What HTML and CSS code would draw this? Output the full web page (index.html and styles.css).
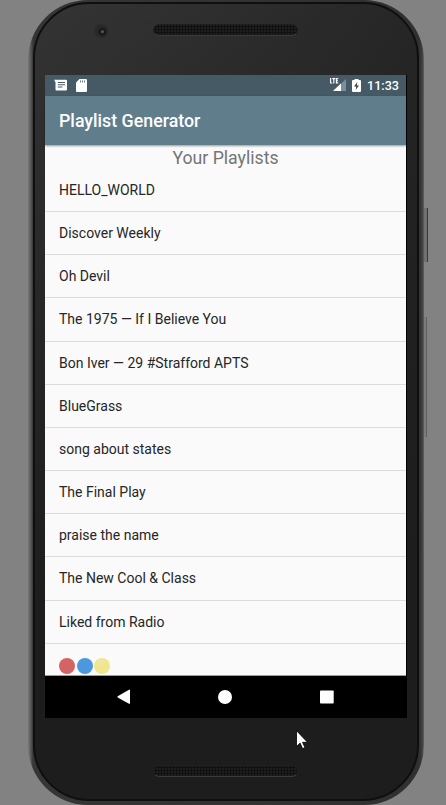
FILE: index.html
```html
<!DOCTYPE html>
<html lang="en">
<head>
<meta charset="utf-8">
<title>Playlist Generator</title>
<link rel="stylesheet" href="styles.css">
</head>
<body>
<div class="phone">
  <i class="side-button power"></i>
  <i class="side-button volume"></i>
  <div class="face">
    <div class="bezel-top"><i class="camera"></i><i class="speaker"></i></div>
    <main class="screen">
      <div class="status">
        <svg class="status-message" width="13" height="13" viewBox="0 0 13 13"><path fill="#fff" fill-rule="evenodd" d="M0 .8h12q1 0 1 1v8.700q0 1-1 1H2.500q-1 0-1-1V3.300zM3.800 3h7.200v1.100H3.800zm0 2.200h7.200v1.100H3.800zm0 2.300h4.700v1.100H3.800z"/></svg>
        <svg class="status-card" width="11" height="13" viewBox="0 0 11 13"><path fill="#fff" d="M3.500 0H10q1 0 1 1v11q0 1-1 1H1q-1 0-1-1V3.500z"/><path stroke="#455a64" stroke-width=".8" d="M4.500 1.500v2M6.500 1.500v2M8.500 1.500v2"/></svg>
        <span class="spacer"></span>
        <svg class="status-signal" width="16" height="14" viewBox="0 0 16 14"><path fill="#78909c" d="M16 1v12H3z"/><path fill="#fff" d="M11 5.600V13H3z"/><path fill="none" stroke="#fff" stroke-width="1.100" d="M.6 0v5h1.700M2.300.6h3M3.800.6v4.900M8.200.6H6.400v4.300h1.800M6.400 2.700h1.600"/></svg>
        <svg class="status-battery" width="9" height="13" viewBox="0 0 9 13"><path fill="#fff" d="M2.500 0h4v1H8q1 0 1 1v10q0 1-1 1H1q-1 0-1-1V2q0-1 1-1h1.500z"/><path fill="#37474f" d="M5.300 3 2 7.500h2.200L3.700 11 7 6.500H4.900z"/></svg>
        <span class="clock">11:33</span>
      </div>
      <header class="app-bar">Playlist Generator</header>
      <div class="content">
        <h1 class="heading">Your Playlists</h1>
        <ul class="list">
          <li>HELLO_WORLD</li>
          <li>Discover Weekly</li>
          <li>Oh Devil</li>
          <li>The 1975 — If I Believe You</li>
          <li>Bon Iver — 29 #Strafford APTS</li>
          <li>BlueGrass</li>
          <li>song about states</li>
          <li>The Final Play</li>
          <li>praise the name</li>
          <li>The New Cool &amp; Class</li>
          <li>Liked from Radio</li>
          <li class="dots"><i class="dot red"></i><i class="dot blue"></i><i class="dot yellow"></i></li>
        </ul>
      </div>
      <nav class="nav">
        <svg width="14" height="16" viewBox="0 0 14 16"><path fill="#fff" d="M.7 7.200 12 .7q1-.5 1 .5v13q0 1-1 .5L.7 8.400Q0 7.800.7 7.200z"/></svg>
        <svg class="home" width="14" height="14" viewBox="0 0 14 14"><circle cx="7" cy="7" r="7" fill="#fff"/></svg>
        <svg width="14" height="14" viewBox="0 0 14 14"><rect y=".5" width="13.700" height="13" rx=".8" fill="#fff"/></svg>
      </nav>
    </main>
    <div class="bezel-bottom"><i class="speaker"></i></div>
  </div>
</div>
<svg class="cursor" width="13" height="20" viewBox="0 0 13 20"><path fill="#fff" stroke="#000" stroke-width=".8" d="M.5.7v15.800l3.600-3.400 2.500 5.500 2.400-1-2.500-5.300h5z"/></svg>
</body>
</html>
```
FILE: styles.css
```css
* { box-sizing: border-box; }
body {
  margin: 0;
  height: 805px;
  overflow: hidden;
  background: #828282;
  font-family: Roboto, "Liberation Sans", sans-serif;
}
.phone {
  position: relative;
  width: 396px;
  height: 805px;
  margin-left: 28px;
  padding: 2px 5px 3px 5px;
  border-radius: 60px;
  background: linear-gradient(90deg, #787878 0, #555 3px, #353535 5px, #303030 391px, #3d3d3d 394px, #606060 396px);
}
.side-button {
  position: absolute;
  left: 396px;
  width: 4px;
  background: #707070;
  border-right: 1px solid #383838;
}
.power { top: 208px; height: 54px; }
.volume { top: 317px; height: 120px; width: 3px; border-color: #606060; background: #7b7b7b; }
.face {
  height: 799px;
  border: 2px solid #0f0f0f;
  border-radius: 56px;
  background: linear-gradient(180deg, transparent 0, #1d1d1d 75%), linear-gradient(100deg, #353435 0, #2b2b2b 50%, #202020 100%);
  overflow: hidden;
}
.bezel-top {
  display: flex;
  height: 71px;
  padding: 20px 0 0 60px;
}
.camera {
  width: 14px;
  height: 14px;
  margin-left: -1px;
  border-radius: 50%;
  background: radial-gradient(circle at 60% 55%, #555 0 1px, #191919 2px 3px, #292929 5px);
}
.speaker {
  display: block;
  width: 145px;
  height: 12px;
  border-radius: 6px;
  border: 1px solid #202020;
  border-bottom-color: #3a3a3a;
  background: radial-gradient(circle, #0b0b0b 0 .7px, #202020 1.500px) 0 0 / 3px 3px;
}
.bezel-top .speaker { margin-left: 45px; }
.screen {
  display: flex;
  flex-direction: column;
  width: 362px;
  height: 643px;
  margin-left: 10px;
  background: linear-gradient(90deg, #fafafa 361px, #000 361px);
}
.status {
  display: flex;
  align-items: flex-start;
  width: 361px;
  height: 21px;
  padding: 4px 7px 0 9px;
  background: #455a64;
}
.status-card { margin-left: 9px; }
.spacer { flex: 1; }
.status-signal { margin: -1px 6px 0 0; }
.status-battery { margin-right: 6px; }
.clock {
  width: 32px;
  color: #fff;
  font-size: 12.600px;
  font-weight: 500;
  line-height: 14px;
  white-space: nowrap;
}
.app-bar {
  z-index: 1;
  width: 361px;
  height: 49px;
  padding-left: 14px;
  background: #607d8b;
  box-shadow: 0 1px 2px rgba(0,0,0,.4);
  color: #fff;
  font-size: 17.800px;
  font-weight: 500;
  line-height: 50px;
}
.content {
  width: 361px;
  height: 531px;
  overflow: hidden;
  border-bottom: 1px solid #9a9e9a;
}
.heading {
  height: 23.800px;
  margin: 0;
  color: #757575;
  font-size: 17.700px;
  font-weight: 400;
  line-height: 27px;
  text-align: center;
}
.list {
  margin: 0;
  padding: 0;
  list-style: none;
}
.list li {
  height: 43.200px;
  padding-left: 14px;
  border-bottom: 1px solid #dcdcdc;
  color: #262626;
  font-size: 14px;
  line-height: 43px;
}
.list .dots {
  display: flex;
  gap: 1.500px;
  padding: 14px 0 0 14.400px;
  border: 0;
}
.dot {
  width: 16px;
  height: 16px;
  border-radius: 50%;
}
.red { background: #d46464; }
.blue { background: #4a98df; }
.yellow { background: radial-gradient(circle at 45% 28%, #eee5a8 0 2px, #f2e68c 4px); }
.nav {
  display: flex;
  align-items: center;
  justify-content: space-between;
  width: 362px;
  height: 42px;
  padding: 0 73px 0 72px;
  background: #000;
}
.home { margin-right: 1px; }
.bezel-bottom { padding: 47px 0 0 118px; }
.cursor {
  position: absolute;
  left: 296px;
  top: 730px;
}
```
